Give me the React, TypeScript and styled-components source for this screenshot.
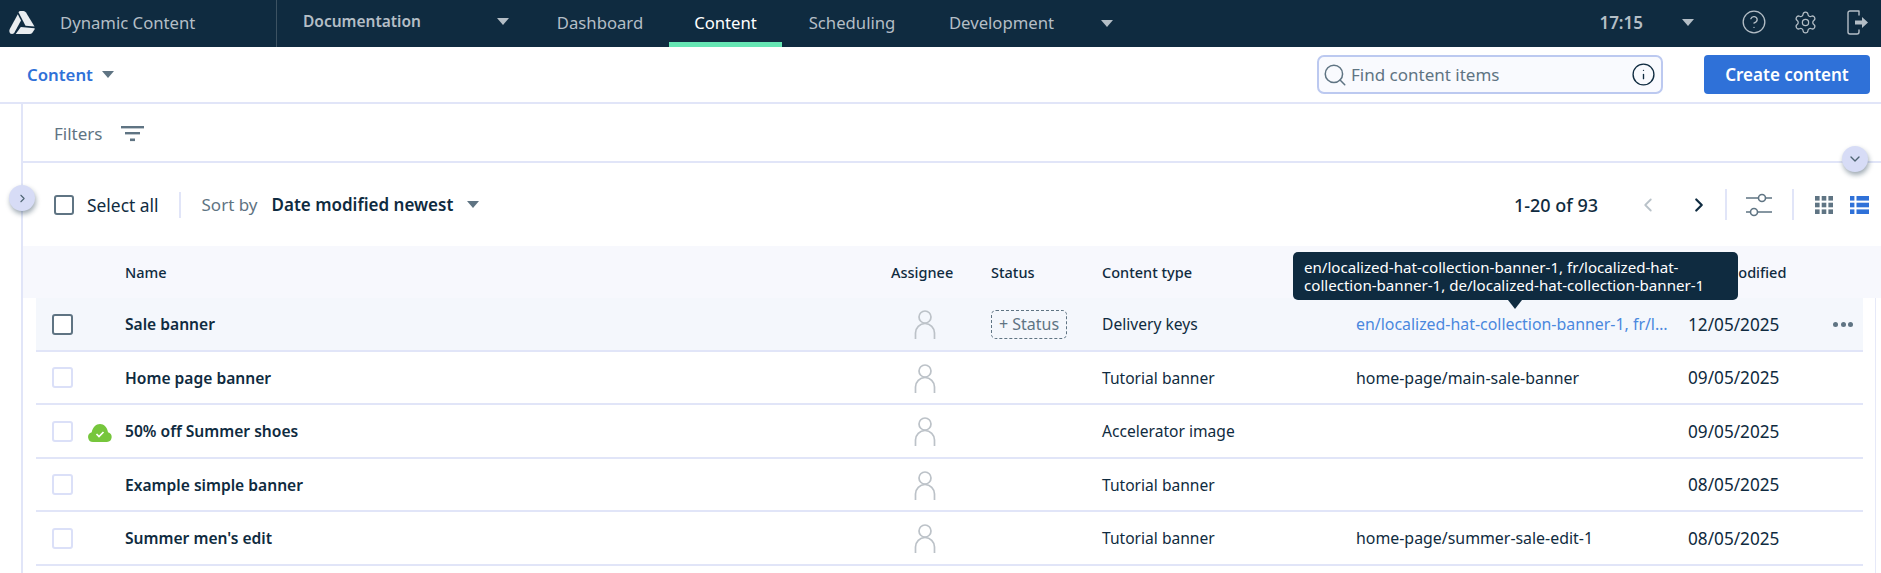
import React from "react";
import styled, { createGlobalStyle } from "styled-components";
import { ChevronDown, ChevronLeft, ChevronRight, CircleHelp, Info, Search, Settings } from "lucide-react";

const GlobalStyle = createGlobalStyle`
  html, body {
    margin: 0;
    padding: 0;
    background: #fff;
    overflow: hidden;
  }
  body {
    font-family: "Noto Sans", "Open Sans", sans-serif;
    color: #0f2b40;
  }
  * {
    box-sizing: border-box;
  }
`;

const Page = styled.div`
  width: 1881px;
  height: 573px;
  overflow: hidden;
`;

const NavBar = styled.header`
  display: flex;
  align-items: stretch;
  height: 47px;
  background: #0f2b40;
  color: #b4bec6;
  font-size: 16.7px;
`;

const Brand = styled.div`
  display: flex;
  align-items: center;
  flex: 0 0 277px;
  padding: 0 0 3px 9px;
  gap: 25px;
  border-right: 1px solid #3c5262;
`;

const HubPicker = styled.div`
  display: flex;
  align-items: center;
  flex: 0 0 254px;
  padding: 0 22px 5px 26px;
  justify-content: space-between;
  font-weight: 600;
  font-size: 15.5px;
`;

const Caret = styled.span<{ $color?: string }>`
  display: inline-block;
  width: 0;
  height: 0;
  border-left: 6.5px solid transparent;
  border-right: 6.5px solid transparent;
  border-top: 7px solid ${(p) => p.$color || "#b4bec6"};
`;

const Tab = styled.div<{ $width: number; $active?: boolean }>`
  display: flex;
  align-items: center;
  justify-content: center;
  flex: 0 0 ${(p) => p.$width}px;
  color: ${(p) => (p.$active ? "#fff" : "#b4bec6")};
  border-bottom: 5px solid ${(p) => (p.$active ? "#66e6b4" : "transparent")};
  padding-top: 2px;
`;

const NavCaret = styled.span`
  display: flex;
  align-items: center;
  margin-left: 20px;
`;

const NavRight = styled.div`
  display: flex;
  align-items: center;
  margin-left: auto;
  padding: 0 12px 3px 0;
`;

const Clock = styled.span`
  font-weight: 600;
  font-size: 17px;
  margin-right: 39px;
`;

const IconSlot = styled.span<{ $left: number }>`
  display: inline-flex;
  margin-left: ${(p) => p.$left}px;
`;

const SubBar = styled.div`
  display: flex;
  align-items: center;
  height: 57px;
  padding: 0 11px 0 27px;
  border-bottom: 2px solid #e1e5f8;
`;

const SectionPicker = styled.div`
  display: flex;
  align-items: center;
  gap: 9px;
  color: #2f71d8;
  font-weight: 600;
  font-size: 16.8px;
`;

const SearchBox = styled.div`
  display: flex;
  align-items: center;
  width: 346px;
  height: 39px;
  margin-left: auto;
  padding: 0 5px 0 3px;
  gap: 3px;
  background: #f9fafe;
  border: 2px solid #bcc9f0;
  border-radius: 7px;
  color: #5f7483;
  font-size: 17px;
`;

const SearchText = styled.span`
  flex: 1;
`;

const PrimaryButton = styled.button`
  width: 166px;
  height: 39px;
  margin-left: 41px;
  border: 0;
  border-radius: 4px;
  background: #2f71d8;
  color: #fff;
  font: 600 17px "Noto Sans", sans-serif;
`;

const Main = styled.main`
  position: relative;
  margin-left: 21px;
  height: 469px;
  border-left: 2px solid #e1e5f8;
`;

const FilterBar = styled.div`
  display: flex;
  align-items: center;
  height: 59px;
  padding: 2px 0 0 31px;
  gap: 19px;
  color: #5f7483;
  font-size: 17px;
  border-bottom: 2px solid #e1e5f8;
`;

const RoundToggle = styled.button<{ $edge: "left" | "right" }>`
  position: absolute;
  ${(p) => (p.$edge === "left" ? "left: -14px; top: 81px;" : "right: 13px; top: 42px;")}
  display: flex;
  align-items: center;
  justify-content: center;
  width: 26px;
  height: 26px;
  padding: 0;
  border: 0;
  border-radius: 50%;
  background: #d7dcf6;
  color: #4e6473;
  box-shadow: 1px 3px 5px rgba(15, 43, 64, 0.4);
`;

const ToolBar = styled.div`
  display: flex;
  align-items: center;
  height: 83px;
  padding: 0 12px 0 31px;
  font-size: 17px;
`;

const CheckBox = styled.span<{ $strong?: boolean; $size: number }>`
  display: block;
  width: ${(p) => p.$size}px;
  height: ${(p) => p.$size}px;
  border: 2px solid ${(p) => (p.$strong ? "#5f7483" : "#dbe0f8")};
  border-radius: 3px;
  background: #fff;
`;

const SelectAll = styled.span`
  margin-left: 13px;
  font-size: 17.4px;
`;

const Rule = styled.span<{ $left: number; $right: number; $height: number }>`
  width: 2px;
  height: ${(p) => p.$height}px;
  margin: 0 ${(p) => p.$right}px 0 ${(p) => p.$left}px;
  background: #e1e5f8;
`;

const SortLabel = styled.span`
  color: #5f7483;
  margin-right: 14px;
`;

const SortValue = styled.span`
  font-weight: 600;
  margin-right: 14px;
`;

const PageCount = styled.span`
  margin-left: auto;
  margin-right: 39px;
  font-size: 18px;
  font-weight: 500;
`;

const PagerButton = styled.span<{ $off?: boolean; $gap: number }>`
  display: inline-flex;
  margin-right: ${(p) => p.$gap}px;
  color: ${(p) => (p.$off ? "#b9c2c9" : "#0f2b40")};
`;

const COLUMNS = "52px 37px 766px 100px 111px 254px 332px 142px 1fr";

const TableHead = styled.div`
  display: grid;
  grid-template-columns: ${COLUMNS};
  align-items: center;
  height: 52px;
  padding-left: 13px;
  background: #f7f8fd;
  font-size: 14.5px;
  font-weight: 500;
`;

const HeadCell = styled.div<{ $col: number }>`
  grid-column: ${(p) => p.$col};
`;

const TableBody = styled.div`
  width: 1853px;
  padding: 0 12px 0 13px;
  border-right: 1px solid #e6e9f8;
  height: 275px;
`;

const Row = styled.div<{ $hover?: boolean }>`
  display: grid;
  grid-template-columns: ${COLUMNS};
  align-items: center;
  height: 53.5px;
  padding-top: 1px;
  font-size: 15.6px;
  background: ${(p) => (p.$hover ? "#f4f7fc" : "#fff")};
  border-bottom: 2px solid #e1e5f8;
`;

const CheckCell = styled.div`
  padding-left: 16px;
`;

const StateCell = styled.div`
  display: flex;
  padding-top: 3px;
`;

const NameCell = styled.div`
  font-weight: 600;
`;

const AssigneeCell = styled.div`
  display: flex;
  padding: 2px 0 0 23px;
`;

const StatusChip = styled.span`
  display: inline-flex;
  align-items: center;
  justify-content: center;
  width: 76px;
  height: 29px;
  border: 1.5px dashed #5f7483;
  border-radius: 5px;
  color: #5f7483;
  font-size: 16px;
`;

const KeysCell = styled.div`
  position: relative;
  min-width: 0;
  font-size: 15.9px;
`;

const KeysLink = styled.div`
  width: 318px;
  overflow: hidden;
  white-space: nowrap;
  text-overflow: ellipsis;
  color: #4a88de;
`;

const Tooltip = styled.div`
  position: absolute;
  left: -63px;
  bottom: 35px;
  width: 445px;
  height: 48px;
  padding: 6px 11px;
  border-radius: 5px;
  background: #0f2b40;
  color: #fff;
  font-size: 15.1px;
  line-height: 18px;

  &::after {
    content: "";
    position: absolute;
    left: 215px;
    bottom: -9px;
    border-left: 7px solid transparent;
    border-right: 7px solid transparent;
    border-top: 9px solid #0f2b40;
  }
`;

const DateCell = styled.div`
  font-size: 17.2px;
`;

const MoreDots = styled.div`
  display: flex;
  gap: 2.5px;
  padding-left: 3px;
`;

const Dot = styled.span`
  width: 5px;
  height: 5px;
  border-radius: 50%;
  background: #5f7483;
`;

const Logo = () => (
  <svg width="26" height="23" viewBox="0 0 26 23" fill="#e9edf0">
    <path d="M8.800 3.200L12 9.500 5.200 22Q3.500 23.500 1.200 22.500-.3 20.500.8 18Z" />
    <path d="M9.500 1.200Q10 0 11.500 0H14.500Q16 0 17 1.500L25.500 15.600 16.500 14.800Z" />
    <path d="M6.700 23L11.800 16 25.500 17.200Q26 17.500 25.500 18.500L23.500 21.500Q22.500 23 20.500 23Z" />
  </svg>
);

const ExitIcon = () => (
  <svg width="22" height="25" viewBox="0 0 22 25" fill="none" stroke="#b4bec6" strokeWidth="1.400">
    <path d="M12 1H3a2 2 0 0 0-2 2v19a2 2 0 0 0 2 2h7a2 2 0 0 0 2-2v-2M12 1v4" strokeLinecap="round" />
    <path d="M8 10.500h7V7l6 5.500-6 5.500v-3.500H8z" fill="#b4bec6" stroke="none" />
  </svg>
);

const FilterIcon = () => (
  <svg width="23" height="16" viewBox="0 0 23 16" fill="#5f7483">
    <rect x="0" y="0" width="23" height="2.400" />
    <rect x="4" y="6" width="15" height="2.400" />
    <rect x="9" y="12.500" width="5" height="2.600" />
  </svg>
);

const SlidersIcon = () => (
  <svg width="26" height="24" viewBox="0 0 26 24" fill="none" stroke="#5f7483" strokeWidth="1.600">
    <path d="M0 5h12M20 5h6M0 19h4M12 19h14" />
    <circle cx="16" cy="5" r="3.500" />
    <circle cx="8" cy="19" r="3.500" />
  </svg>
);

const GridIcon = () => (
  <svg width="18" height="18" viewBox="0 0 18 18" fill="#5f7483">
    {[0, 6.7, 13.4].flatMap((y) =>
      [0, 6.7, 13.4].map((x) => <rect key={`${x}-${y}`} x={x} y={y} width="4.600" height="4.600" />)
    )}
  </svg>
);

const ListIcon = () => (
  <svg width="19" height="18" viewBox="0 0 19 18" fill="#2f71d8">
    {[0, 6.7, 13.4].map((y) => (
      <g key={y}>
        <rect x="0" y={y} width="4.400" height="4.600" />
        <rect x="6.500" y={y} width="12.500" height="4.600" />
      </g>
    ))}
  </svg>
);

const PersonIcon = () => (
  <svg width="22" height="30" viewBox="0 0 22 30" fill="none" stroke="#bcc2c8" strokeWidth="1.700">
    <circle cx="11" cy="7" r="6" />
    <path d="M1.500 29v-6a9.500 9.500 0 0 1 19 0v6" />
  </svg>
);

const CloudIcon = () => (
  <svg width="24" height="18" viewBox="0 0 24 18">
    <path d="M5 18a5 5 0 0 1-1.300-9.800C4.600 3.500 8 0 12 0s7.200 3.300 8 8.200A5 5 0 0 1 19 18z" fill="#76c63c" />
    <path d="M8.500 10l2.500 2.500 4.500-4.500" fill="none" stroke="#fff" strokeWidth="1.700" />
  </svg>
);

const KEYS_TEXT =
  "en/localized-hat-collection-banner-1, fr/localized-hat-collection-banner-1, de/localized-hat-collection-banner-1";

const rows = [
  { name: "Home page banner", type: "Tutorial banner", keys: "home-page/main-sale-banner", date: "09/05/2025" },
  { name: "50% off Summer shoes", type: "Accelerator image", keys: "", date: "09/05/2025", published: true },
  { name: "Example simple banner", type: "Tutorial banner", keys: "", date: "08/05/2025" },
  { name: "Summer men's edit", type: "Tutorial banner", keys: "home-page/summer-sale-edit-1", date: "08/05/2025" },
];

const App: React.FC = () => {
  return (
    <Page>
      <GlobalStyle />
      <NavBar>
        <Brand>
          <Logo />
          <span>Dynamic Content</span>
        </Brand>
        <HubPicker>
          <span>Documentation</span>
          <Caret />
        </HubPicker>
        <Tab $width={138}>Dashboard</Tab>
        <Tab $width={113} $active>Content</Tab>
        <Tab $width={140}>Scheduling</Tab>
        <Tab $width={159}>Development</Tab>
        <NavCaret>
          <Caret />
        </NavCaret>
        <NavRight>
          <Clock>17:15</Clock>
          <Caret />
          <IconSlot $left={47}>
            <CircleHelp size={26} strokeWidth={1.2} />
          </IconSlot>
          <IconSlot $left={26}>
            <Settings size={25} strokeWidth={1.2} />
          </IconSlot>
          <IconSlot $left={29}>
            <ExitIcon />
          </IconSlot>
        </NavRight>
      </NavBar>
      <SubBar>
        <SectionPicker>
          Content
          <Caret $color="#5f7483" />
        </SectionPicker>
        <SearchBox>
          <Search size={26} strokeWidth={1.4} color="#5f7483" />
          <SearchText>Find content items</SearchText>
          <Info size={25} strokeWidth={1.3} color="#0f2b40" />
        </SearchBox>
        <PrimaryButton>Create content</PrimaryButton>
      </SubBar>
      <Main>
        <RoundToggle $edge="left">
          <ChevronRight size={13} />
        </RoundToggle>
        <RoundToggle $edge="right">
          <ChevronDown size={16} />
        </RoundToggle>
        <FilterBar>
          Filters
          <FilterIcon />
        </FilterBar>
        <ToolBar>
          <CheckBox $strong $size={20} />
          <SelectAll>Select all</SelectAll>
          <Rule $left={20} $right={21} $height={26} />
          <SortLabel>Sort by</SortLabel>
          <SortValue>Date modified newest</SortValue>
          <Caret $color="#5f7483" />
          <PageCount>1-20 of 93</PageCount>
          <PagerButton $off $gap={29}>
            <ChevronLeft size={22} strokeWidth={2} />
          </PagerButton>
          <PagerButton $gap={15}>
            <ChevronRight size={22} strokeWidth={2.4} />
          </PagerButton>
          <Rule $left={0} $right={19} $height={31} />
          <SlidersIcon />
          <Rule $left={20} $right={21} $height={31} />
          <GridIcon />
          <IconSlot $left={17}>
            <ListIcon />
          </IconSlot>
        </ToolBar>
        <TableHead>
          <HeadCell $col={3}>Name</HeadCell>
          <HeadCell $col={4}>Assignee</HeadCell>
          <HeadCell $col={5}>Status</HeadCell>
          <HeadCell $col={6}>Content type</HeadCell>
          <HeadCell $col={7}>Delivery keys</HeadCell>
          <HeadCell $col={8}>Date modified</HeadCell>
        </TableHead>
        <TableBody>
          <Row $hover>
            <CheckCell>
              <CheckBox $strong $size={21} />
            </CheckCell>
            <div />
            <NameCell>Sale banner</NameCell>
            <AssigneeCell>
              <PersonIcon />
            </AssigneeCell>
            <div>
              <StatusChip>+ Status</StatusChip>
            </div>
            <div>Delivery keys</div>
            <KeysCell>
              <Tooltip>{KEYS_TEXT}</Tooltip>
              <KeysLink>{KEYS_TEXT}</KeysLink>
            </KeysCell>
            <DateCell>12/05/2025</DateCell>
            <MoreDots>
              <Dot />
              <Dot />
              <Dot />
            </MoreDots>
          </Row>
          {rows.map((row) => (
            <Row key={row.name}>
              <CheckCell>
                <CheckBox $size={21} />
              </CheckCell>
              <StateCell>{row.published && <CloudIcon />}</StateCell>
              <NameCell>{row.name}</NameCell>
              <AssigneeCell>
                <PersonIcon />
              </AssigneeCell>
              <div />
              <div>{row.type}</div>
              <KeysCell>{row.keys}</KeysCell>
              <DateCell>{row.date}</DateCell>
              <div />
            </Row>
          ))}
        </TableBody>
      </Main>
    </Page>
  );
};

export default App;
